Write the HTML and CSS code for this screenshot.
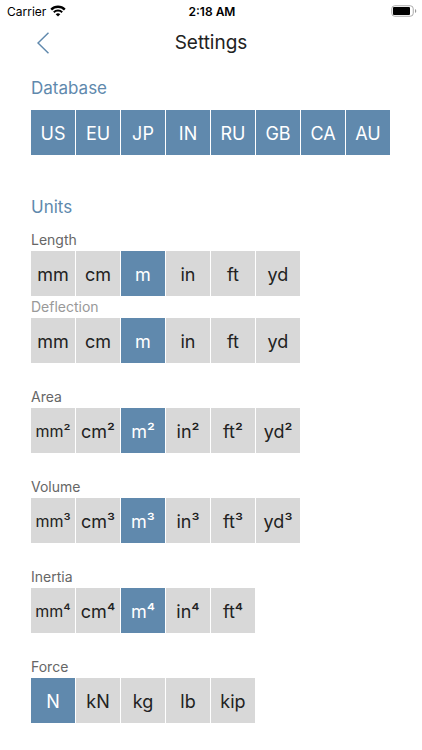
FILE: index.html
```html
<!DOCTYPE html>
<html lang="en">
<head>
    <meta charset="UTF-8">
    <meta name="viewport" content="width=device-width, initial-scale=1.0">
    <title>Settings</title>
    <link rel="stylesheet" href="styles.css">
</head>
<body>

    <div class="status-bar">
        <div class="carrier">
            <span>Carrier</span>
            <svg class="wifi" viewBox="0 0 16 12" aria-hidden="true">
                <path d="M1.2 4.6 A9.6 9.6 0 0 1 14.8 4.6" fill="none" stroke="#000" stroke-width="2.4"/>
                <path d="M3.8 7.3 A6 6 0 0 1 12.2 7.3" fill="none" stroke="#000" stroke-width="2"/>
                <path d="M8 11.6 L5.7 9.3 A3.3 3.3 0 0 1 10.3 9.3 Z" fill="#000"/>
            </svg>
        </div>
        <div class="time">2:18 AM</div>
        <svg class="battery" viewBox="0 0 26 12" aria-hidden="true">
            <rect x="0.75" y="0.75" width="21.5" height="10.5" rx="3" fill="#fff" stroke="#aaa"/>
            <rect x="2" y="2" width="17" height="8" rx="1" fill="#000"/>
            <path d="M24 4 A2.2 2.2 0 0 1 24 8 Z" fill="#999"/>
        </svg>
    </div>

    <header class="nav">
        <button class="back" aria-label="Back">
            <svg viewBox="0 0 12 22" aria-hidden="true">
                <path d="M11.5 0.7 L1 11 L11.5 21.3" fill="none" stroke="#6089ad" stroke-width="1.5"/>
            </svg>
        </button>
        <h1>Settings</h1>
    </header>

    <main class="content">
        <section class="database">
            <h2 id="database">Database</h2>
            <div class="options" role="group" aria-labelledby="database">
                <button class="active">US</button>
                <button class="active">EU</button>
                <button class="active">JP</button>
                <button class="active">IN</button>
                <button class="active">RU</button>
                <button class="active">GB</button>
                <button class="active">CA</button>
                <button class="active">AU</button>
            </div>
        </section>

        <section class="units">
            <h2>Units</h2>

            <div class="unit joined">
                <h3 id="length">Length</h3>
                <div class="options" role="group" aria-labelledby="length">
                    <button>mm</button>
                    <button>cm</button>
                    <button class="active">m</button>
                    <button>in</button>
                    <button>ft</button>
                    <button>yd</button>
                </div>
            </div>

            <div class="unit">
                <h3 id="deflection" class="light">Deflection</h3>
                <div class="options" role="group" aria-labelledby="deflection">
                    <button>mm</button>
                    <button>cm</button>
                    <button class="active">m</button>
                    <button>in</button>
                    <button>ft</button>
                    <button>yd</button>
                </div>
            </div>

            <div class="unit">
                <h3 id="area">Area</h3>
                <div class="options" role="group" aria-labelledby="area">
                    <button class="small">mm²</button>
                    <button>cm²</button>
                    <button class="active">m²</button>
                    <button>in²</button>
                    <button>ft²</button>
                    <button>yd²</button>
                </div>
            </div>

            <div class="unit">
                <h3 id="volume">Volume</h3>
                <div class="options" role="group" aria-labelledby="volume">
                    <button class="small">mm³</button>
                    <button>cm³</button>
                    <button class="active">m³</button>
                    <button>in³</button>
                    <button>ft³</button>
                    <button>yd³</button>
                </div>
            </div>

            <div class="unit">
                <h3 id="inertia">Inertia</h3>
                <div class="options" role="group" aria-labelledby="inertia">
                    <button class="small">mm⁴</button>
                    <button>cm⁴</button>
                    <button class="active">m⁴</button>
                    <button>in⁴</button>
                    <button>ft⁴</button>
                </div>
            </div>

            <div class="unit">
                <h3 id="force">Force</h3>
                <div class="options" role="group" aria-labelledby="force">
                    <button class="active">N</button>
                    <button>kN</button>
                    <button>kg</button>
                    <button>lb</button>
                    <button>kip</button>
                </div>
            </div>
        </section>
    </main>

    <script>
        // Databases can be combined, every unit row keeps exactly one choice
        document.querySelectorAll(".options").forEach(function (group) {
            const buttons = group.querySelectorAll("button");
            const multiple = group.closest(".database") !== null;

            function update() {
                buttons.forEach(b => b.setAttribute("aria-pressed", b.classList.contains("active")));
            }

            buttons.forEach(function (button) {
                button.addEventListener("click", function () {
                    if (multiple) {
                        button.classList.toggle("active");
                    } else {
                        buttons.forEach(b => b.classList.remove("active"));
                        button.classList.add("active");
                    }
                    update();
                });
            });
            update();
        });
    </script>
</body>
</html>
```
FILE: styles.css
```css
* {
    box-sizing: border-box;
}

body {
    margin: 0;
    font-family: Inter, "Liberation Sans", sans-serif;
    background-color: #fff;
    color: #222;
}

h1, h2, h3 {
    margin: 0;
    font-weight: 400;
}

button {
    border: none;
    padding: 0;
    font-family: inherit;
    cursor: pointer;
}

/* Status bar */
.status-bar {
    display: grid;
    grid-template-columns: 1fr auto 1fr;
    align-items: center;
    height: 22px;
    padding: 0 5px 0 7px;
    font-size: 12px;
    color: #000;
}

.carrier {
    display: flex;
    align-items: center;
    gap: 4px;
}

.wifi {
    width: 16px;
    height: 12px;
}

.time {
    font-weight: 600;
}

.battery {
    width: 26px;
    height: 12px;
    justify-self: end;
}

/* Title row */
.nav {
    display: grid;
    grid-template-columns: 46px 1fr 46px;
    align-items: center;
    height: 42px;
    padding: 0 20px;
}

.nav h1 {
    font-size: 19px;
    line-height: 24px;
    text-align: center;
}

.back {
    display: flex;
    align-items: center;
    justify-content: center;
    height: 42px;
    background: none;
}

.back svg {
    width: 12px;
    height: 22px;
}

/* Settings */
.content {
    padding: 12px 31px 28px;
}

h2 {
    font-size: 17px;
    line-height: 25px;
    color: #6089ad;
}

.database {
    margin-bottom: 40px;
}

.database h2,
.units h2 {
    margin-bottom: 9px;
}

.unit {
    margin-bottom: 23px;
}

.joined {
    margin-bottom: 0;
}

h3 {
    font-size: 14px;
    line-height: 22px;
    color: #666;
}

.light {
    color: #999;
}

.options {
    display: flex;
    gap: 1px;
}

.options button {
    width: 44px;
    height: 45px;
    padding-top: 1px;
    font-size: 18px;
    background-color: #d8d8d8;
    color: #222;
}

.options .small {
    font-size: 16px;
}

.options .active {
    background-color: #6089ad;
    color: #fff;
}
```
